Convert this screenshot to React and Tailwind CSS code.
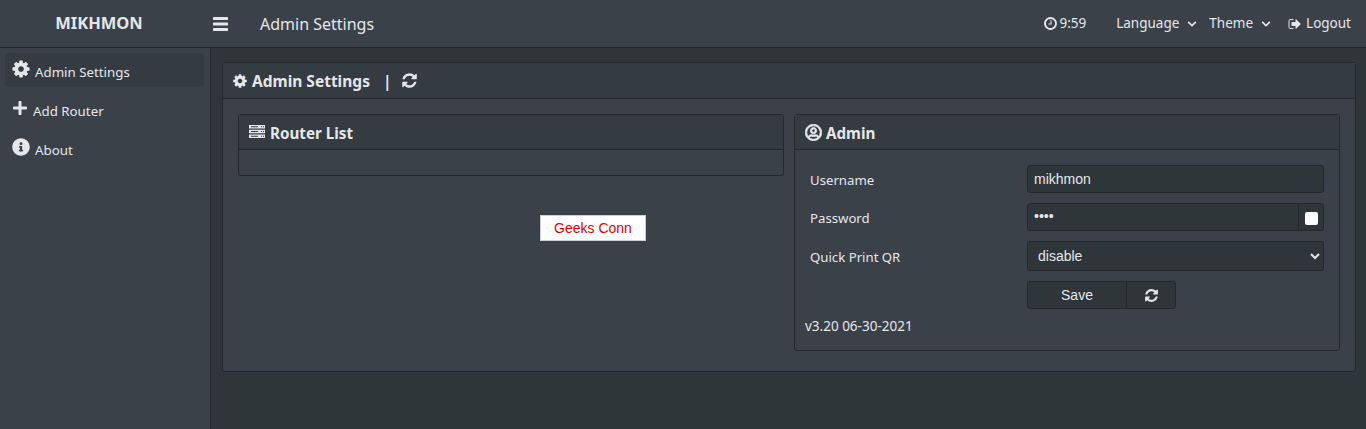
import React from "react";
import { FaPlus, FaInfoCircle, FaRegUserCircle, FaChevronDown } from "react-icons/fa";

const Fa4 = ({ d, className }) => (
  <svg viewBox="0 0 1792 1792" fill="currentColor" className={className}><path d={d} /></svg>
);
const COG = "M1152 896q0-106-75-181t-181-75-181 75-75 181 75 181 181 75 181-75 75-181zm512-109v222q0 12-8 23t-20 13l-185 28q-19 54-39 91 35 50 107 138 10 12 10 25t-9 23q-27 37-99 108t-94 71q-12 0-26-9l-138-108q-44 23-91 38-16 136-29 186-7 28-36 28h-222q-14 0-24.500-8.500t-11.500-21.500l-28-184q-49-16-90-37l-141 107q-10 9-25 9-14 0-25-11-126-114-165-168-7-10-7-23 0-12 8-23 15-21 51-66.500t54-70.500q-27-50-41-99l-183-27q-13-2-21-12.500t-8-23.500v-222q0-12 8-23t19-13l186-28q14-46 39-92-40-57-107-138-10-12-10-24 0-10 9-23 26-36 98.500-107.500t94.500-71.500q13 0 26 10l138 107q44-23 91-38 16-136 29-186 7-28 36-28h222q14 0 24.500 8.500t11.500 21.500l28 184q49 16 90 37l142-107q9-9 24-9 13 0 25 10 129 119 165 170 7 8 7 22 0 12-8 23-15 21-51 66.500t-54 70.500q26 50 41 98l183 28q13 2 21 12.500t8 23.500z";
const REFRESH = "M1639 1056q0 5-1 7-64 268-268 434.500t-478 166.500q-146 0-282.500-55t-243.500-157l-129 129q-19 19-45 19t-45-19-19-45v-448q0-26 19-45t45-19h448q26 0 45 19t19 45-19 45l-137 137q71 66 161 102t187 36q134 0 250-65t186-179q11-17 53-117 8-23 30-23h192q13 0 22.500 9.500t9.500 22.500zm25-800v448q0 26-19 45t-45 19h-448q-26 0-45-19t-19-45 19-45l138-138q-148-137-349-137-134 0-250 65t-186 179q-11 17-53 117-8 23-30 23h-199q-13 0-22.500-9.500t-9.500-22.500v-7q65-268 270-434.500t480-166.500q146 0 284 55.500t245 156.500l130-129q19-19 45-19t45 19 19 45z";
const CLOCK = "M1024 544v448q0 14-9 23t-23 9h-320q-14 0-23-9t-9-23v-64q0-14 9-23t23-9h224v-352q0-14 9-23t23-9h64q14 0 23 9t9 23zm416 352q0-148-73-273t-198-198-273-73-273 73-198 198-73 273 73 273 198 198 273 73 273-73 198-198 73-273zm224 0q0 209-103 385.500t-279.500 279.500-385.500 103-385.500-103-279.500-279.500-103-385.500 103-385.500 279.500-279.500 385.500-103 385.500 103 279.500 279.500 103 385.500z";
const SIGNOUT = "M704 1440q0 4 1 20t.5 26.500-3 23.500-10 19.500-20.500 6.500h-320q-119 0-203.500-84.500t-84.500-203.500v-704q0-119 84.500-203.500t203.500-84.500h320q13 0 22.500 9.500t9.500 22.500q0 4 1 20t.5 26.500-3 23.500-10 19.500-20.500 6.500h-320q-66 0-113 47t-47 113v704q0 66 47 113t113 47h312l11.500 1 11.500 3 8 5.500 7 9 2 13.500zm928-544q0 26-19 45l-544 544q-19 19-45 19t-45-19-19-45v-288h-448q-26 0-45-19t-19-45v-384q0-26 19-45t45-19h448v-288q0-26 19-45t45-19 45 19l544 544q19 19 19 45z";

const Bars = ({ className }) => (
  <svg viewBox="0 0 15 14" fill="currentColor" className={className}>
    <rect x="0" y="0" width="15" height="3" rx="0.5" />
    <rect x="0" y="5.5" width="15" height="3" rx="0.5" />
    <rect x="0" y="11" width="15" height="3" rx="0.5" />
  </svg>
);
const Server = ({ className }) => (
  <svg viewBox="0 0 16 13" fill="currentColor" fillRule="evenodd" className={className}>
    <path d="M0 0h16v3.600H0zM2 1.300v1h7v-1zM12 1.300v1h1v-1zM14 1.300v1h1v-1z" />
    <path d="M0 4.700h16v3.600H0zM2 6v1h7V6zM12 6v1h1V6zM14 6v1h1V6z" />
    <path d="M0 9.400h16V13H0zM2 10.700v1h7v-1zM12 10.700v1h1v-1zM14 10.700v1h1v-1z" />
  </svg>
);

const arial = "font-['Liberation_Sans',Arial,sans-serif]";
const field = `h-[28px] bg-[#2f3639] border border-[#23282c] text-[14px] text-[#e4e7ea] ${arial}`;

export default function App() {
  return (
    <div className="h-[429px] w-[1366px] overflow-hidden flex flex-col bg-[#2f3639] text-[#e4e7ea] font-['Noto_Sans',sans-serif]">
      <header className="h-[48px] shrink-0 flex items-center bg-[#3a4149] border-b border-[#23282c]">
        <div className="w-[198px] text-center text-[16.5px] font-bold text-[#e4e7ea]">MIKHMON</div>
        <Bars className="ml-[15px] w-[15px] h-[14px] text-[#e4e7ea]" />
        <div className="ml-[32px] text-[16px]">Admin Settings</div>
        <div className="ml-auto flex items-center text-[13.5px]">
          <Fa4 d={CLOCK} className="w-[15px] h-[15px]" />
          <span className="ml-px text-[13.5px]">9:59</span>
          <span className="ml-[30px]">Language</span>
          <FaChevronDown className="ml-[8px] w-[10px] h-[10px]" />
          <span className="ml-[12px]">Theme</span>
          <FaChevronDown className="ml-[8px] w-[10px] h-[10px]" />
          <Fa4 d={SIGNOUT} className="ml-[17px] w-[14px] h-[14px]" />
          <span className="ml-[4px] mr-[15px]">Logout</span>
        </div>
      </header>
      <div className="flex flex-1 min-h-0">
        <aside className="w-[211px] shrink-0 bg-[#3a4149] border-r border-[#23282c] pt-[5px] pl-[5px] pr-[6px] text-[13.3px]">
          <div className="h-[34px] rounded-[4px] bg-[#343b41] flex items-center pl-[6px]">
            <Fa4 d={COG} className="w-[20px] h-[20px] mb-[3px]" />
            <span className="ml-[4px] pt-[6px]">Admin Settings</span>
          </div>
          <div className="h-[34px] mt-[5px] flex items-center pl-[7px]">
            <FaPlus className="w-[16px] h-[16px] mb-[3px]" />
            <span className="ml-[5px] pt-[6px]">Add Router</span>
          </div>
          <div className="h-[34px] mt-[5px] flex items-center pl-[7px]">
            <FaInfoCircle className="w-[18px] h-[18px] mb-[3px]" />
            <span className="ml-[5px] pt-[6px]">About</span>
          </div>
        </aside>
        <main className="flex-1 pl-[11px] pr-[10px] pt-[14px]">
          <section className="h-[310px] bg-[#3a4149] border border-[#23282c] rounded-[3px]">
            <div className="h-[36px] bg-[#343b41] border-b border-[#23282c] flex items-center pl-[9px] text-[15.5px] font-bold">
              <Fa4 d={COG} className="w-[16px] h-[16px]" />
              <span className="ml-[4px] pt-[3px]">Admin Settings</span>
              <span className="ml-[13px] pt-[3px]">|</span>
              <Fa4 d={REFRESH} className="ml-[10px] w-[17px] h-[17px]" />
            </div>
            <div className="flex px-[15px] pt-[15px] gap-[10px]">
              <div className="w-[546px] shrink-0">
                <div className="h-[62px] border border-[#23282c] rounded-[3px]">
                  <div className="h-[35px] bg-[#343b41] border-b border-[#23282c] flex items-center pl-[10px] text-[15.2px] font-bold">
                    <Server className="w-[16px] h-[13px] mb-px" />
                    <span className="ml-[5px] pt-[3px]">Router List</span>
                  </div>
                </div>
                <div className="flex mt-[39px] pl-[302px]">
                  <div className={`w-[106px] h-[26px] bg-white border border-[#c8ced3] flex items-center justify-center text-[14px] text-[#e00000] ${arial}`}>Geeks Conn</div>
                </div>
              </div>
              <div className="w-[546px] h-[237px] border border-[#23282c] rounded-[3px]">
                <div className="h-[35px] bg-[#343b41] border-b border-[#23282c] flex items-center pl-[10px] text-[15.2px] font-bold">
                  <FaRegUserCircle className="w-[17px] h-[17px] stroke-[24]" />
                  <span className="ml-[4px] pt-[3px]">Admin</span>
                </div>
                <div className="pl-[15px] pt-[15px] text-[13.2px]">
                  <div className="flex items-center h-[28px]">
                    <span className="w-[217px] pt-[3px]">Username</span>
                    <input readOnly value="mikhmon" className={`${field} w-[297px] rounded-[3px] pl-[6px] pb-px outline-none`} />
                  </div>
                  <div className="flex items-center h-[28px] mt-[10px]">
                    <span className="w-[217px] pt-[3px]">Password</span>
                    <input readOnly type="password" value="1234" className={`${field} w-[272px] rounded-l-[3px] pl-[6px] pb-[3px] outline-none`} />
                    <div className={`${field} w-[26px] -ml-px rounded-r-[3px] flex items-center justify-center`}>
                      <input type="checkbox" className="w-[13px] h-[13px] mt-[3px] appearance-none rounded-[2px] bg-white" />
                    </div>
                  </div>
                  <div className="flex items-center h-[30px] mt-[10px]">
                    <span className="w-[217px] pt-[3px]">Quick Print QR</span>
                    <select defaultValue="disable" className={`${field} h-[30px] w-[297px] rounded-[3px] pl-[6px] outline-none`}>
                      <option>disable</option>
                    </select>
                  </div>
                  <div className="flex h-[28px] mt-[10px] ml-[217px]">
                    <div className={`${field} w-[100px] rounded-l-[3px] flex items-center justify-center`}>Save</div>
                    <div className={`${field} w-[50px] -ml-px rounded-r-[3px] flex items-center justify-center`}>
                      <Fa4 d={REFRESH} className="w-[15px] h-[15px]" />
                    </div>
                  </div>
                  <div className="mt-[7px] ml-[-5px] text-[13.5px]">v3.20 06-30-2021</div>
                </div>
              </div>
            </div>
          </section>
        </main>
      </div>
    </div>
  );
}
